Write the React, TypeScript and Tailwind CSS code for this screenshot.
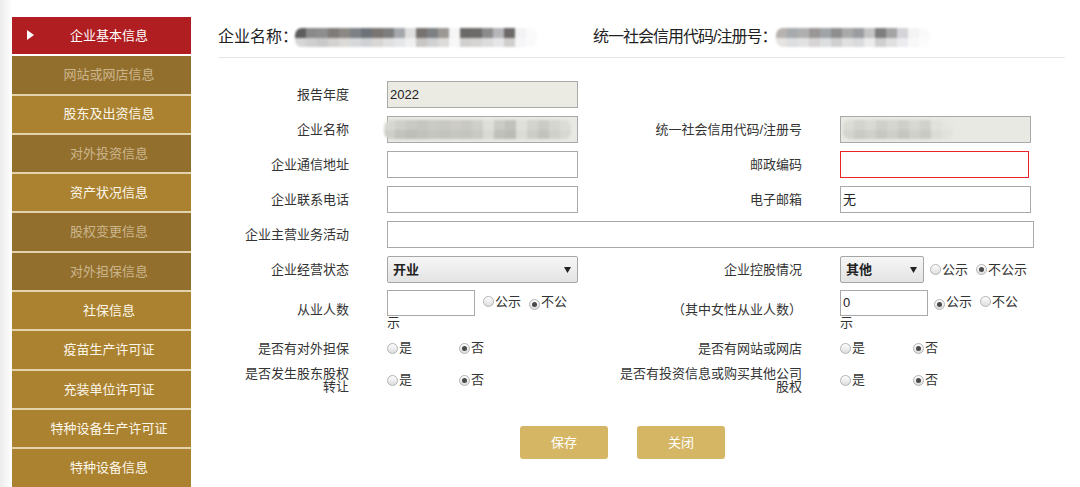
import type { ReactNode } from "react";

const navItems = [
  { name: "企业基本信息", state: "active" },
  { name: "网站或网店信息", state: "off" },
  { name: "股东及出资信息", state: "on" },
  { name: "对外投资信息", state: "off" },
  { name: "资产状况信息", state: "on" },
  { name: "股权变更信息", state: "off" },
  { name: "对外担保信息", state: "off" },
  { name: "社保信息", state: "on" },
  { name: "疫苗生产许可证", state: "on" },
  { name: "充装单位许可证", state: "on" },
  { name: "特种设备生产许可证", state: "on" },
  { name: "特种设备信息", state: "on" },
];

const headNameTop = ["#5c5c5c", "#8a8a8a", "#8e8e8e", "#7f7b78", "#8c8884", "#7d8186", "#6c7278", "#7a7572", "#7f7e7e", "#a4a7ab", "#dedede", "#777371", "#7e8184", "#9c9894", "#f6f6f6", "#6b6968", "#6d6b6a", "#8c8c8d", "#b6b6ba", "#6c6968", "#f2f2f4", "#fafafa"];
const headNameBottom = ["#d6d6d6", "#cfcfcf", "#c9c9c9", "#d4d2d0", "#dcdad8", "#d6d8da", "#cfd2d5", "#d8d6d4", "#e0e0e0", "#e5e6e8", "#f0f0f0", "#c8c7c6", "#cfd0d2", "#dddbd9", "#f7f7f7", "#d2d0cf", "#d6d4d3", "#dcdcdd", "#e6e6e8", "#d0cecd", "#f6f6f8", "#fafafa"];
const headCodeTop = ["#b5b2b0", "#a7aaad", "#b0b0b0", "#9a9696", "#a1a4a7", "#8e8e8e", "#a9a9a9", "#9a9ca0", "#c4c4c4", "#7e7e7e", "#a4a4a4", "#d4d4d8", "#f4f4f4", "#fafafa"];
const headCodeBottom = ["#e6e4e2", "#dcdee0", "#e2e2e2", "#d6d4d4", "#dcdee0", "#d0d0d0", "#e0e0e0", "#d8dadc", "#ececec", "#cfcfcf", "#e0e0e0", "#ececf0", "#f8f8f8", "#fcfcfc"];
const rowNameTop = ["#d8d8d2", "#cfcfc9", "#c9c9c3", "#c6c6c0", "#cacac4", "#c8c8c2", "#cccbc5", "#c9c9c3", "#d0d0ca", "#dedfd8", "#cbcbc5", "#c2c2bc", "#e0e0da", "#d4d4ce", "#cbcbc5", "#d6d6d0", "#dcdcd6"];
const rowNameBottom = ["#cfcfc9", "#c3c3bd", "#bebeb8", "#c2c2bc", "#c6c6c0", "#c4c4be", "#c7c7c1", "#c5c5bf", "#cacac4", "#dadad4", "#c0c0ba", "#bcbcb6", "#dcdcd6", "#cdcdc7", "#c3c3bd", "#d0d0ca", "#d8d8d2"];
const rowCodeTop = ["#dcdcd6", "#d4d4ce", "#dadad4", "#d0d0ca", "#d6d6d0", "#cfcfc9", "#d8d8d2", "#d2d2cc", "#e2e2dc", "#e6e6e0"];
const rowCodeBottom = ["#d4d4ce", "#cacac4", "#d0d0ca", "#c8c8c2", "#cfcfc9", "#c6c6c0", "#d0d0ca", "#cacac4", "#dcdcd6", "#e2e2dc"];

const Pixelate = ({ top, bottom, cell = 11, className = "" }: { top: string[]; bottom: string[]; cell?: number; className?: string }) => (
  <div className={`flex flex-col overflow-hidden rounded-[7px] blur-[0.8px] ${className}`}>
    <div className="flex h-[10px]">
      {top.map((c, i) => (
        <div key={i} className="h-full shrink-0" style={{ width: cell, background: c }} />
      ))}
    </div>
    <div className="flex h-[9px]">
      {bottom.map((c, i) => (
        <div key={i} className="h-full shrink-0" style={{ width: cell, background: c }} />
      ))}
    </div>
  </div>
);

const Dot = ({ checked, className = "" }: { checked?: boolean; className?: string }) => (
  <span className={`mr-[1px] inline-flex h-[11px] w-[11px] shrink-0 items-center justify-center rounded-full border border-[#b4b4b4] bg-[linear-gradient(#fdfdfd,#dedede)] align-[-1px] ${className}`}>
    {checked && <span className="h-[5px] w-[5px] rounded-full bg-[#4a4a4a]" />}
  </span>
);

const Radio = ({ label, checked, className = "" }: { label: string; checked?: boolean; className?: string }) => (
  <span className={`inline-flex items-center ${className}`}>
    <Dot checked={checked} />
    {label}
  </span>
);

const Label = ({ children, className = "" }: { children: ReactNode; className?: string }) => (
  <div className={`text-right leading-[13px] text-[#333] ${className}`}>{children}</div>
);

const TextBox = ({ value, className = "" }: { value?: string; className?: string }) => (
  <div className={`flex h-[27px] items-center border border-[#a9a9a9] px-[2px] text-[13px] text-[#222] ${className}`}>
    {value}
  </div>
);

const SelectBox = ({ value, className = "" }: { value: string; className?: string }) => (
  <div className={`flex h-[27px] items-center justify-between rounded-[2px] border border-[#a6a6a6] bg-[linear-gradient(#f7f7f7,#e3e3e3)] pl-[5px] pr-[6px] text-[13px] font-bold text-[#222] ${className}`}>
    <span>{value}</span>
    <svg width="7" height="6" viewBox="0 0 7 6">
      <path d="M0 0h7L3.5 6z" fill="#222" />
    </svg>
  </div>
);

const rowGrid = "grid grid-cols-[169px_223px_230px_225px] items-center";
const leftLabel = "pl-[20px] pr-[38px]";
const rightLabel = "pr-[38px]";

const App = () => {
  return (
    <div className="flex h-[487px] w-[1080px] overflow-hidden bg-white font-['Liberation_Sans','Noto_Sans_CJK_SC',sans-serif] text-[13px] text-[#333]">
      <aside className="w-[191px] shrink-0 bg-[linear-gradient(to_right,#ececec,#ffffff_12px)] pl-[12px] pt-[17px]">
        {navItems.map((item) => (
          <div
            key={item.name}
            className={`relative flex h-[39.3px] items-center justify-center border-b-2 pl-[15px] text-[13px] ${
              item.state === "active"
                ? "border-white bg-[#b01e22] text-white"
                : item.state === "off"
                ? "border-[#e3d3ac] bg-[#936f2d] text-[#cbb68c]"
                : "border-[#e3d3ac] bg-[#ab822f] text-[#fbf6ea]"
            }`}
          >
            {item.state === "active" && (
              <svg className="absolute left-[15px] top-[13px]" width="7" height="10" viewBox="0 0 7 10">
                <path d="M0 0L7 5L0 10z" fill="#fff" />
              </svg>
            )}
            {item.name}
          </div>
        ))}
      </aside>

      <main className="w-[874px] pl-[27px]">
        <div className="flex h-[58px] items-start border-b border-[#e6e6e6] pt-[27px] text-[16px] leading-[20px] text-[#222]">
          <div className="flex w-[375px] items-center">
            <span>企业名称：</span>
            <Pixelate top={headNameTop} bottom={headNameBottom} className="-ml-[3px]" />
          </div>
          <div className="flex items-center">
            <span className="tracking-[-1px]">统一社会信用代码/注册号：</span>
            <Pixelate top={headCodeTop} bottom={headCodeBottom} />
          </div>
        </div>

        <div className="pt-[19px]">
          <div className={`${rowGrid} h-[35px]`}>
            <Label className={leftLabel}>报告年度</Label>
            <TextBox value="2022" className="w-[191px] bg-[#ebebe4]" />
          </div>

          <div className={`${rowGrid} h-[35px]`}>
            <Label className={leftLabel}>企业名称</Label>
            <div className="flex h-[27px] w-[191px] items-center border border-[#a9a9a9] bg-[#e9e9e3]">
              <Pixelate top={rowNameTop} bottom={rowNameBottom} className="-ml-[4px] h-[19px]" />
            </div>
            <Label className={rightLabel}>统一社会信用代码/注册号</Label>
            <div className="flex h-[27px] w-[191px] items-center border border-[#a9a9a9] bg-[#e9e9e3]">
              <Pixelate top={rowCodeTop} bottom={rowCodeBottom} className="ml-[2px]" />
            </div>
          </div>

          <div className={`${rowGrid} h-[35px]`}>
            <Label className={leftLabel}>企业通信地址</Label>
            <TextBox className="w-[191px]" />
            <Label className={rightLabel}>邮政编码</Label>
            <TextBox className="h-[26px] w-[189px] border-[#e8262a]" />
          </div>

          <div className={`${rowGrid} h-[35px]`}>
            <Label className={leftLabel}>企业联系电话</Label>
            <TextBox className="w-[191px]" />
            <Label className={rightLabel}>电子邮箱</Label>
            <TextBox value="无" className="w-[191px]" />
          </div>

          <div className={`${rowGrid} h-[35px]`}>
            <Label className={leftLabel}>企业主营业务活动</Label>
            <div className="col-span-3">
              <TextBox className="w-[647px]" />
            </div>
          </div>

          <div className={`${rowGrid} h-[35px]`}>
            <Label className={leftLabel}>企业经营状态</Label>
            <SelectBox value="开业" className="w-[191px]" />
            <Label className={rightLabel}>企业控股情况</Label>
            <div className="flex items-center whitespace-nowrap">
              <SelectBox value="其他" className="w-[84px]" />
              <Radio label="公示" className="ml-[6px]" />
              <Radio label="不公示" checked className="ml-[8px]" />
            </div>
          </div>

          <div className={`${rowGrid} h-[45px]`}>
            <Label className={leftLabel}>从业人数</Label>
            <div className="w-[186px] leading-[14px]">
              <span className="inline-block h-[26px] w-[88px] border border-[#a9a9a9] align-middle" />
              <Dot className="ml-[8px]" />
              公示
              <Dot checked className="ml-[8px]" />
              不公示
            </div>
            <Label className={rightLabel}>（其中女性从业人数）</Label>
            <div className="w-[186px] leading-[14px]">
              <span className="inline-flex h-[26px] w-[88px] items-center border border-[#a9a9a9] px-[2px] align-middle text-[#222]">0</span>
              <Dot checked className="ml-[6px]" />
              公示
              <Dot className="ml-[8px]" />
              不公示
            </div>
          </div>

          <div className={`${rowGrid} h-[32px]`}>
            <Label className={leftLabel}>是否有对外担保</Label>
            <div className="flex items-center">
              <Radio label="是" className="w-[72px]" />
              <Radio label="否" checked />
            </div>
            <Label className={rightLabel}>是否有网站或网店</Label>
            <div className="flex items-center">
              <Radio label="是" className="w-[73px]" />
              <Radio label="否" checked />
            </div>
          </div>

          <div className={`${rowGrid} h-[32px]`}>
            <Label className={leftLabel}>是否发生股东股权转让</Label>
            <div className="flex items-center">
              <Radio label="是" className="w-[72px]" />
              <Radio label="否" checked />
            </div>
            <Label className={rightLabel}>是否有投资信息或购买其他公司股权</Label>
            <div className="flex items-center">
              <Radio label="是" className="w-[73px]" />
              <Radio label="否" checked />
            </div>
          </div>

          <div className="ml-[302px] mt-[30px] flex gap-[29px]">
            <button className="flex h-[33px] w-[88px] items-center justify-center rounded-[3px] bg-[#d5b665] text-[13px] text-white">
              保存
            </button>
            <button className="flex h-[33px] w-[88px] items-center justify-center rounded-[3px] bg-[#d5b665] text-[13px] text-white">
              关闭
            </button>
          </div>
        </div>
      </main>
    </div>
  );
};

export default App;
